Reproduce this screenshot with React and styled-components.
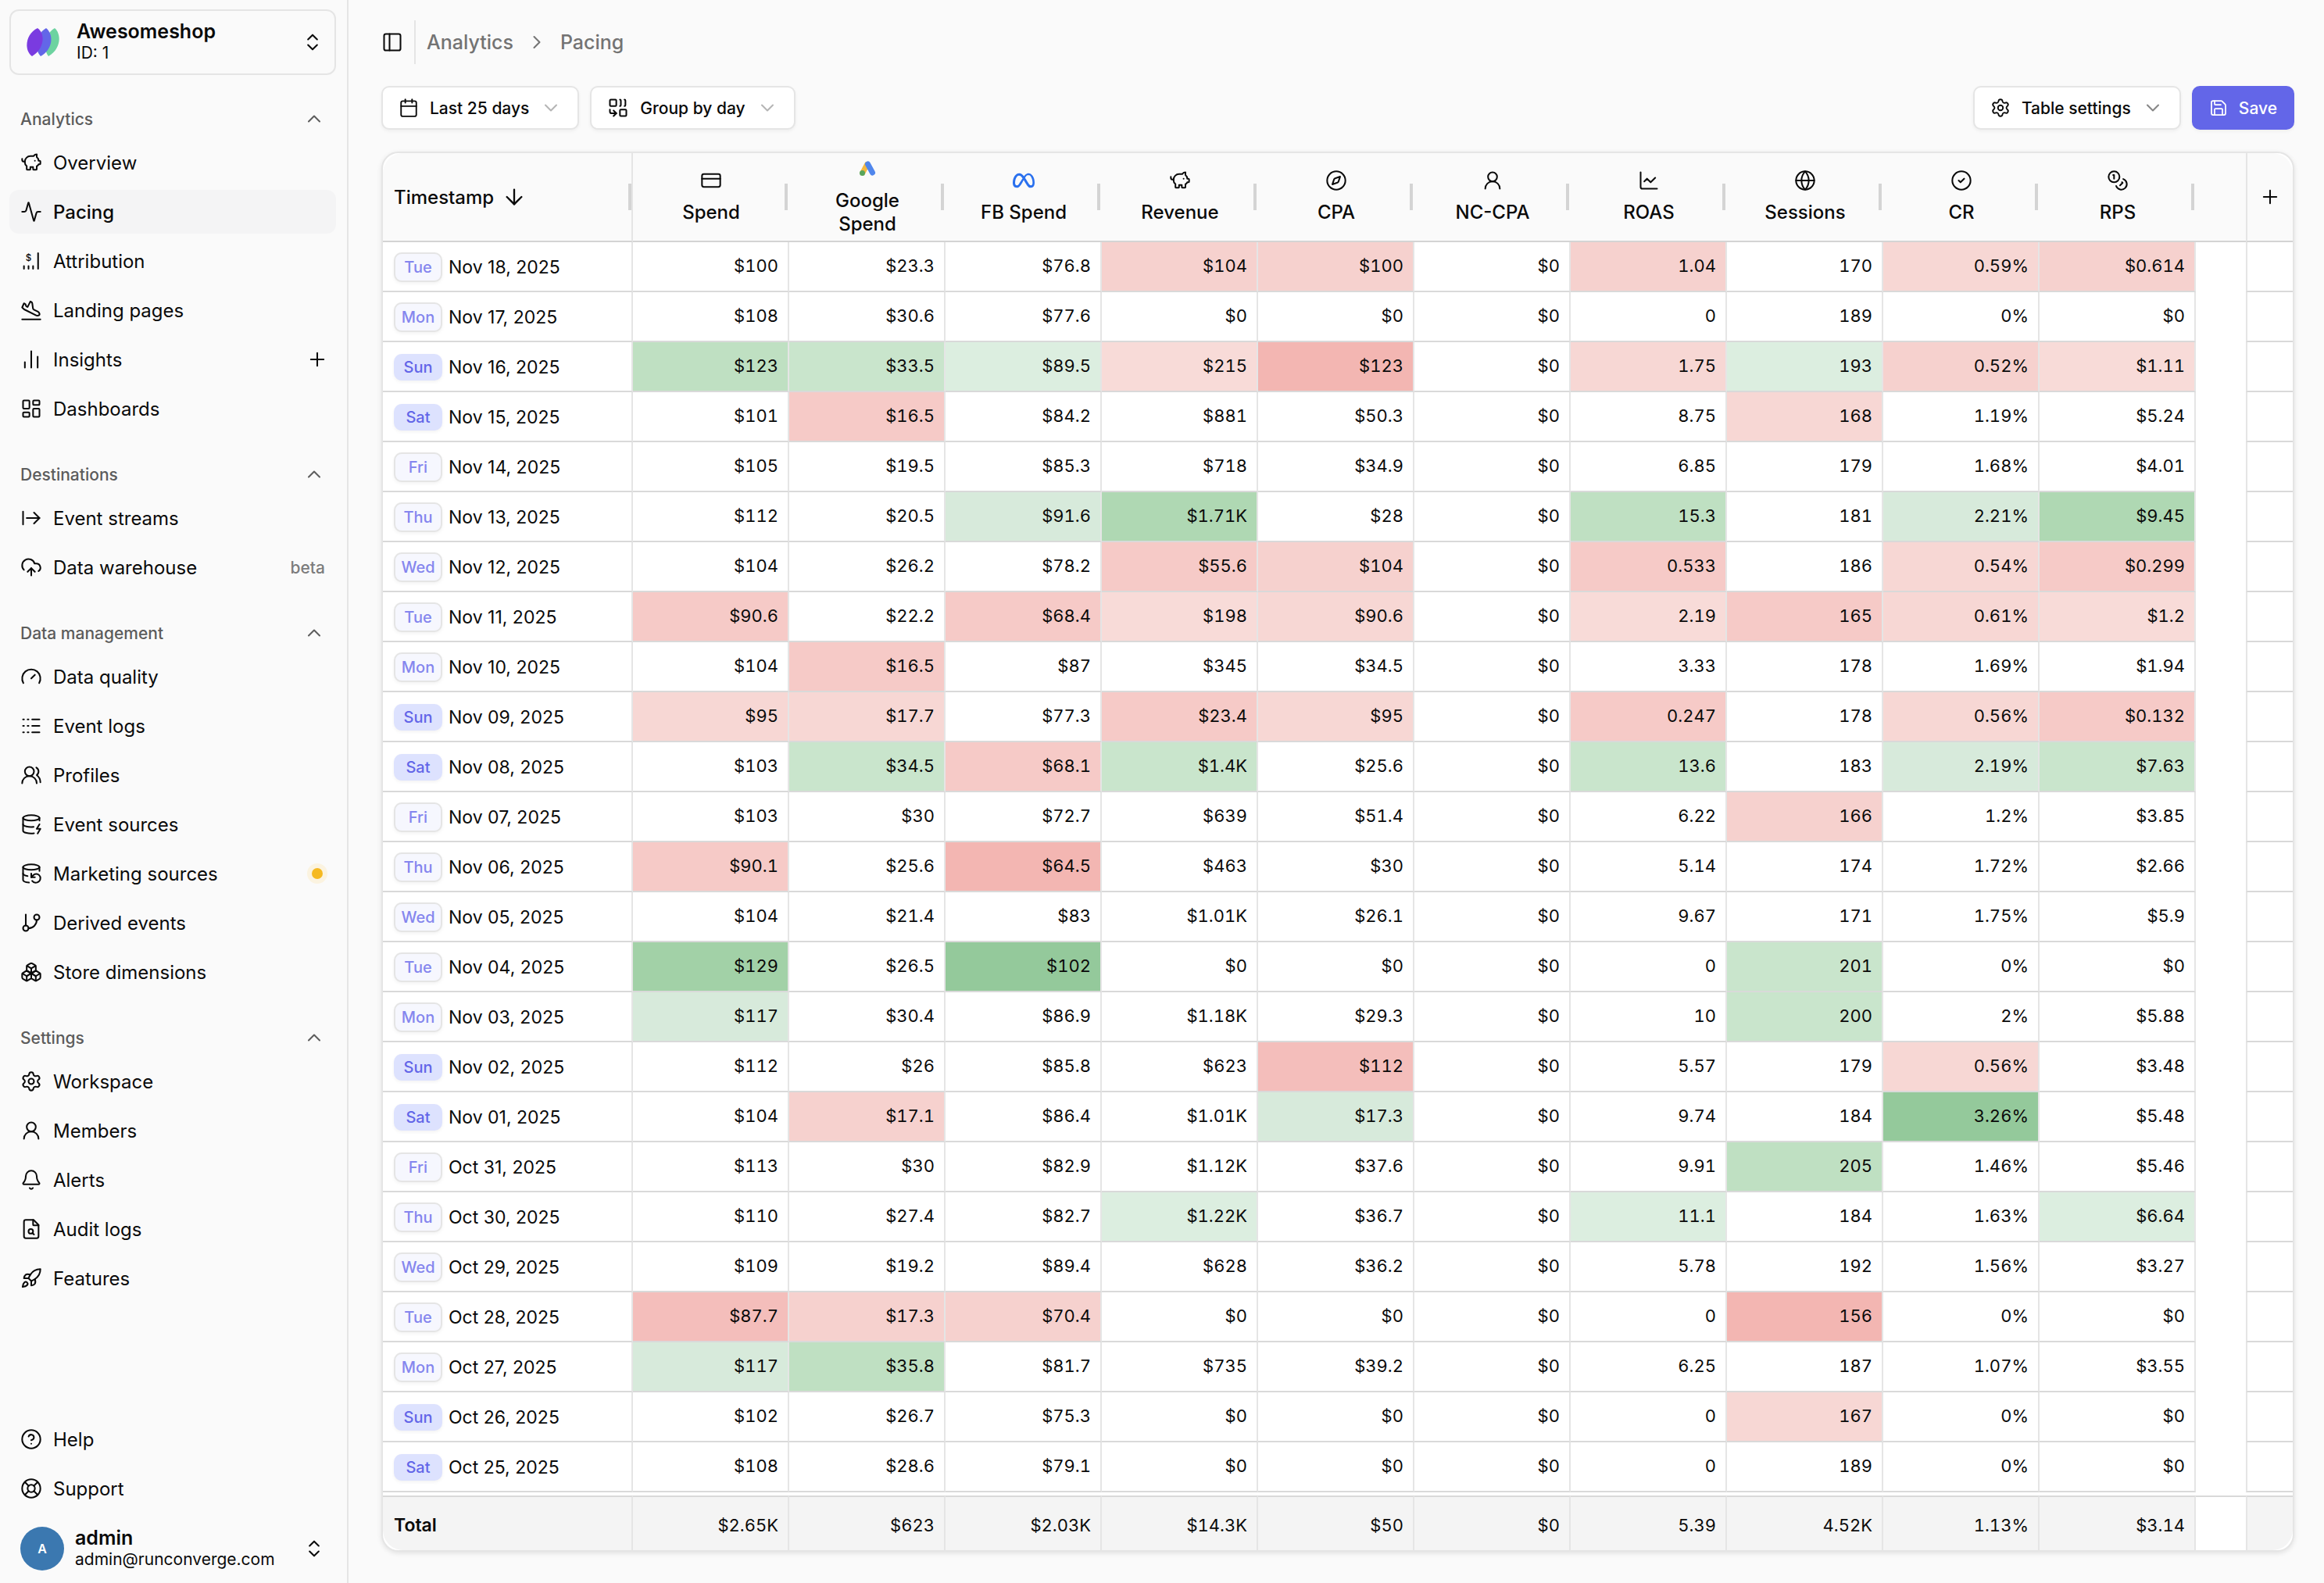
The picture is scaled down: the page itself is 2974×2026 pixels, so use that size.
import React, { useState } from "react";
import styled, { createGlobalStyle } from "styled-components";
import {
  Activity,
  ArrowDown,
  ArrowRightFromLine,
  Bell,
  Boxes,
  Calendar,
  ChartLine,
  ChartNoAxesColumn,
  ChevronDown,
  ChevronRight,
  ChevronsUpDown,
  ChevronUp,
  CircleCheck,
  CircleQuestionMark,
  CloudUpload,
  Coins,
  Combine,
  Compass,
  CreditCard,
  DatabaseBackup,
  DatabaseZap,
  Gauge,
  GitBranch,
  Globe,
  LayoutDashboard,
  LifeBuoy,
  Logs,
  PanelLeft,
  PiggyBank,
  PlaneLanding,
  Plus,
  Rocket,
  Save,
  Settings,
  UserRound,
  UsersRound,
} from "lucide-react";
import { SiMeta } from "react-icons/si";

const GlobalStyle = createGlobalStyle`
  * {
    box-sizing: border-box;
  }

  body {
    margin: 0;
    background-color: #fafafa;
    color: #0a0a0a;
    font-family: Inter, "Liberation Sans", sans-serif;
    font-size: 24px;
  }

  button {
    font-family: inherit;
    color: inherit;
    cursor: pointer;
  }

  svg {
    flex-shrink: 0;
  }

  .lucide {
    stroke-width: 1.75;
  }
`;

/* ---------- layout ---------- */

const Page = styled.div`
  display: flex;
  min-height: 100vh;
`;

const Sidebar = styled.aside`
  display: flex;
  flex-direction: column;
  flex-shrink: 0;
  width: 446px;
  padding: 12px 14px 16px 12px;
  border-right: 2px solid #e5e5e5;
`;

const Main = styled.main`
  flex: 1;
  min-width: 0;
  padding: 26px 38px 40px 42px;
`;

/* ---------- sidebar ---------- */

const WorkspaceButton = styled.button`
  display: flex;
  align-items: center;
  height: 84px;
  padding: 0 14px 0 20px;
  border: 2px solid #e5e5e5;
  border-radius: 12px;
  background: none;
  text-align: left;
`;

const AccountButton = styled.button`
  display: flex;
  align-items: center;
  margin-top: 21px;
  padding: 0 14px;
  border: none;
  background: none;
  text-align: left;
`;

const AccountText = styled.span`
  display: flex;
  flex-direction: column;
  flex: 1;
  margin-left: ${(props) => (props.$wide ? "22px" : "14px")};
  font-size: 21px;
  line-height: 28px;
`;

const AccountName = styled.strong`
  font-size: 25px;
  font-weight: 600;
`;

const Avatar = styled.span`
  display: flex;
  align-items: center;
  justify-content: center;
  width: 56px;
  height: 56px;
  border-radius: 50%;
  background-color: #3b78b0;
  color: white;
  font-size: 16px;
  font-weight: 600;
`;

const NavGroup = styled.section`
  margin-top: 32px;
`;

const GroupHeader = styled.button`
  display: flex;
  align-items: center;
  justify-content: space-between;
  width: 100%;
  height: 48px;
  margin-bottom: 4px;
  padding: 0 14px;
  border: none;
  background: none;
  font-size: 21px;
  font-weight: 500;
  color: #5c5c5c;
`;

const NavList = styled.ul`
  display: flex;
  flex-direction: column;
  gap: 7px;
  margin: 0;
  padding: 0;
  list-style: none;
`;

const NavItem = styled.li`
  display: flex;
  align-items: center;
  height: 56px;
  padding: 0 10px 0 14px;
  border-radius: 12px;
  background-color: ${(props) => (props.$active ? "#f4f4f5" : "transparent")};
`;

const NavLink = styled.a`
  display: flex;
  flex: 1;
  align-items: center;
  gap: 14px;
  color: inherit;
  font-size: 24px;
  font-weight: ${(props) => (props.$active ? 500 : 400)};
  text-decoration: none;
`;

const BareButton = styled.button`
  display: flex;
  padding: 0;
  border: none;
  background: none;
`;

const Beta = styled.span`
  padding-right: 4px;
  color: #7c7c7c;
  font-size: 21px;
  font-weight: 500;
`;

const StatusDot = styled.span`
  width: 14px;
  height: 14px;
  margin-right: 7px;
  border-radius: 50%;
  background-color: #f5b921;
  box-shadow: 0 0 0 6px #fbf3e0;
`;

const SidebarFooter = styled.div`
  display: flex;
  flex-direction: column;
  margin-top: auto;
`;

/* ---------- top bar and toolbar ---------- */

const TopBar = styled.header`
  display: flex;
  align-items: center;
  height: 56px;
`;

const Divider = styled.span`
  align-self: stretch;
  width: 2px;
  margin: 0 14px;
  background-color: #e5e5e5;
`;

const Breadcrumb = styled.nav`
  display: flex;
  align-items: center;
  gap: 16px;
  color: #737373;
  font-size: 25px;
  font-weight: 500;

  a {
    color: inherit;
    text-decoration: none;
  }
`;

const Toolbar = styled.div`
  display: flex;
  gap: 14px;
  margin: 28px 0;
`;

const Spacer = styled.span`
  flex: 1;
`;

const ToolButton = styled.button`
  display: flex;
  align-items: center;
  gap: 14px;
  height: 56px;
  padding: 0 20px;
  border: 2px solid ${(props) => (props.$primary ? "#6366e8" : "#e5e5e5")};
  border-radius: 10px;
  background-color: ${(props) => (props.$primary ? "#6366e8" : "white")};
  box-shadow: 0 2px 4px rgba(0, 0, 0, 0.05);
  color: ${(props) => (props.$primary ? "white" : "inherit")};
  font-size: 21px;
  font-weight: 500;
`;

/* ---------- table ---------- */

const Card = styled.div`
  border: 2px solid #e5e5e5;
  border-radius: 22px;
  background-color: white;
  box-shadow: 0 2px 6px rgba(0, 0, 0, 0.1);
`;

const Clip = styled.div`
  overflow: hidden;
  border-radius: 26px;
`;

const Table = styled.table`
  width: 100%;
  table-layout: fixed;
  border-collapse: separate;
  border-spacing: 0;
`;

const Col = styled.col`
  width: ${(props) => props.$width};
`;

const HeadCell = styled.th`
  position: relative;
  height: 114px;
  padding: 0 26px;
  border-bottom: 2px solid #d4d4d4;
  background-color: #fafafa;
  font-weight: 500;
  line-height: 30px;
`;

const TimeHeadCell = styled(HeadCell)`
  padding: 0 14px;
  border-right: 2px solid #e5e5e5;
`;

const AddHeadCell = styled(HeadCell)`
  padding: 0;
  border-left: 2px solid #e5e5e5;

  button {
    width: 100%;
    justify-content: center;
  }
`;

const SortButton = styled(BareButton)`
  align-items: center;
  gap: 10px;
  font-size: 24px;
  font-weight: 500;
`;

const HeadLabel = styled.div`
  display: flex;
  flex-direction: column;
  align-items: center;
  gap: 12px;
`;

// Grip at the right edge of a header cell
const ResizeHandle = styled.span`
  position: absolute;
  top: 39px;
  right: ${(props) => (props.$first ? "0" : "2px")};
  width: 4px;
  height: 34px;
  background-color: #d4d4d4;
  cursor: col-resize;
`;

const DateCell = styled.th`
  height: 64px;
  padding: 2px 14px 0;
  border-right: 2px solid #e5e5e5;
  border-bottom: 2px solid #d9d9d9;
  font-size: 23px;
  font-weight: 400;
  text-align: left;
`;

const DateContent = styled.div`
  display: flex;
  align-items: center;
  gap: 8px;
`;

const DayBadge = styled.span`
  display: flex;
  align-items: center;
  justify-content: center;
  width: 62px;
  height: ${(props) => (props.$weekend ? "34px" : "38px")};
  border: ${(props) => (props.$weekend ? "none" : "2px solid #e5e5e5")};
  border-radius: 10px;
  background-color: ${(props) => (props.$weekend ? "#dde2fe" : "#f6f7fe")};
  box-shadow: 0 2px 4px rgba(0, 0, 0, 0.05);
  color: ${(props) => (props.$weekend ? "#6366e8" : "#8586ee")};
  font-size: 20px;
  font-weight: 500;
`;

const ValueCell = styled.td`
  padding: 0 12px 2px;
  border-right: 2px solid #e5e5e5;
  border-bottom: 2px solid #d9d9d9;
  background-color: ${(props) => props.$tone || "white"};
  font-size: 22px;
  font-weight: 400;
  font-variant-numeric: tabular-nums;
  text-align: right;
`;

const FillerCell = styled.td`
  padding: 0;
`;

const EndCell = styled.td`
  padding: 0;
  border-left: 2px solid #e5e5e5;
  border-bottom: 2px solid #d9d9d9;
`;

const GapCell = styled.td`
  height: 4px;
  padding: 0;
`;

const TotalRow = styled.tr`
  > * {
    height: 70px;
    border-top: 2px solid #d9d9d9;
    border-bottom: none;
    background-color: #f4f4f4;
  }

  > ${FillerCell} {
    background-color: white;
  }
`;

const TotalLabel = styled.th`
  padding: 4px 14px 0;
  border-right: 2px solid #e5e5e5;
  font-size: 23px;
  font-weight: 600;
  text-align: left;
`;

const TotalCell = styled(ValueCell)`
  padding: 4px 12px 0;
`;

/* ---------- drawings ---------- */

const Logo = () => (
  <svg width="42" height="36" viewBox="0 0 42 36" aria-hidden="true">
    <path d="M36 0C45 8 44 27 28 36C21 28 22 8 36 0Z" fill="#6dd3a0" />
    <path d="M25 0C35 8 34 27 18 36C10 28 11 8 25 0Z" fill="#6366e8" />
    <path d="M14 0C25 8 22 27 7 36C-4 28 -1 7 14 0Z" fill="#7a3be0" />
  </svg>
);

const AttributionIcon = ({ size }) => (
  <svg width={size} height={size} viewBox="0 0 24 24" aria-hidden="true">
    <path
      d="M19.5 3.5v17M4 17.5v3M9 17.5v3M14 17.5v3"
      fill="none"
      stroke="currentColor"
      strokeWidth="1.75"
      strokeLinecap="round"
    />
    <text x="9" y="12" fontSize="10" fontWeight="500" textAnchor="middle" fill="currentColor">
      $
    </text>
  </svg>
);

const AuditIcon = ({ size }) => (
  <svg
    width={size}
    height={size}
    viewBox="0 0 24 24"
    fill="none"
    stroke="currentColor"
    strokeWidth="1.75"
    strokeLinecap="round"
    strokeLinejoin="round"
    aria-hidden="true"
  >
    <path d="M6 22a2 2 0 0 1-2-2V4a2 2 0 0 1 2-2h8.5L20 7.5V20a2 2 0 0 1-2 2Z" />
    <path d="M14 2v5a1 1 0 0 0 1 1h5" />
    <circle cx="11.5" cy="14.5" r="2.5" />
    <path d="M13.3 16.3 15 18" />
  </svg>
);

const GoogleAdsIcon = ({ size }) => (
  <svg width={size} height={size} viewBox="0 0 28 28" strokeLinecap="round" aria-hidden="true">
    <path d="M13.500 8.500L8 19" stroke="#f4b942" strokeWidth="7" />
    <path d="M14.500 8L20.500 19" stroke="#5086ec" strokeWidth="7" />
    <circle cx="7.500" cy="19.500" r="3.500" fill="#58a55c" />
  </svg>
);

const MetaIcon = ({ size }) => <SiMeta size={size} color="#2a70ee" />;

/* ---------- data ---------- */

const groups = [
  {
    title: "Analytics",
    items: [
      { label: "Overview", icon: PiggyBank },
      { label: "Pacing", icon: Activity, active: true },
      { label: "Attribution", icon: AttributionIcon },
      { label: "Landing pages", icon: PlaneLanding },
      { label: "Insights", icon: ChartNoAxesColumn, canAdd: true },
      { label: "Dashboards", icon: LayoutDashboard },
    ],
  },
  {
    title: "Destinations",
    items: [
      { label: "Event streams", icon: ArrowRightFromLine },
      { label: "Data warehouse", icon: CloudUpload, beta: true },
    ],
  },
  {
    title: "Data management",
    items: [
      { label: "Data quality", icon: Gauge },
      { label: "Event logs", icon: Logs },
      { label: "Profiles", icon: UsersRound },
      { label: "Event sources", icon: DatabaseZap },
      { label: "Marketing sources", icon: DatabaseBackup, warning: true },
      { label: "Derived events", icon: GitBranch },
      { label: "Store dimensions", icon: Boxes },
    ],
  },
  {
    title: "Settings",
    items: [
      { label: "Workspace", icon: Settings },
      { label: "Members", icon: UserRound },
      { label: "Alerts", icon: Bell },
      { label: "Audit logs", icon: AuditIcon },
      { label: "Features", icon: Rocket },
    ],
  },
];

const helpItems = [
  { label: "Help", icon: CircleQuestionMark },
  { label: "Support", icon: LifeBuoy },
];

const columns = [
  { label: "Spend", icon: CreditCard },
  { label: "Google Spend", icon: GoogleAdsIcon },
  { label: "FB Spend", icon: MetaIcon },
  { label: "Revenue", icon: PiggyBank },
  { label: "CPA", icon: Compass },
  { label: "NC-CPA", icon: UserRound },
  { label: "ROAS", icon: ChartLine },
  { label: "Sessions", icon: Globe },
  { label: "CR", icon: CircleCheck },
  { label: "RPS", icon: Coins },
];

const tones = {
  r1: "#f8dbd8",
  r2: "#f7d7d4",
  r3: "#f6d1ce",
  r4: "#f6cac7",
  r5: "#f4bebb",
  r6: "#f3b6b2",
  g1: "#dceee0",
  g2: "#d7eadb",
  g3: "#c9e5cc",
  g4: "#bfe0c2",
  g5: "#afd8b3",
  g6: "#a2d1a7",
  g7: "#94c99b",
};

// Each row: day, date, values, tone of each value ("--" for none)
const rows = [
  ["Tue", "Nov 18, 2025", "$100 $23.3 $76.8 $104 $100 $0 1.04 170 0.59% $0.614", "-- -- -- r3 r3 -- r3 -- r2 r3"],
  ["Mon", "Nov 17, 2025", "$108 $30.6 $77.6 $0 $0 $0 0 189 0% $0", ""],
  ["Sun", "Nov 16, 2025", "$123 $33.5 $89.5 $215 $123 $0 1.75 193 0.52% $1.11", "g4 g3 g1 r1 r6 -- r2 g1 r3 r1"],
  ["Sat", "Nov 15, 2025", "$101 $16.5 $84.2 $881 $50.3 $0 8.75 168 1.19% $5.24", "-- r4 -- -- -- -- -- r2 -- --"],
  ["Fri", "Nov 14, 2025", "$105 $19.5 $85.3 $718 $34.9 $0 6.85 179 1.68% $4.01", ""],
  ["Thu", "Nov 13, 2025", "$112 $20.5 $91.6 $1.71K $28 $0 15.3 181 2.21% $9.45", "-- -- g2 g5 -- -- g4 -- g2 g5"],
  ["Wed", "Nov 12, 2025", "$104 $26.2 $78.2 $55.6 $104 $0 0.533 186 0.54% $0.299", "-- -- -- r4 r3 -- r4 -- r2 r4"],
  ["Tue", "Nov 11, 2025", "$90.6 $22.2 $68.4 $198 $90.6 $0 2.19 165 0.61% $1.2", "r4 -- r4 r1 r2 -- r1 r4 r2 r1"],
  ["Mon", "Nov 10, 2025", "$104 $16.5 $87 $345 $34.5 $0 3.33 178 1.69% $1.94", "-- r4 -- -- -- -- -- -- -- --"],
  ["Sun", "Nov 09, 2025", "$95 $17.7 $77.3 $23.4 $95 $0 0.247 178 0.56% $0.132", "r2 r2 -- r4 r2 -- r4 -- r2 r4"],
  ["Sat", "Nov 08, 2025", "$103 $34.5 $68.1 $1.4K $25.6 $0 13.6 183 2.19% $7.63", "-- g3 r4 g3 -- -- g3 -- g2 g3"],
  ["Fri", "Nov 07, 2025", "$103 $30 $72.7 $639 $51.4 $0 6.22 166 1.2% $3.85", "-- -- -- -- -- -- -- r3 -- --"],
  ["Thu", "Nov 06, 2025", "$90.1 $25.6 $64.5 $463 $30 $0 5.14 174 1.72% $2.66", "r4 -- r6 -- -- -- -- -- -- --"],
  ["Wed", "Nov 05, 2025", "$104 $21.4 $83 $1.01K $26.1 $0 9.67 171 1.75% $5.9", ""],
  ["Tue", "Nov 04, 2025", "$129 $26.5 $102 $0 $0 $0 0 201 0% $0", "g6 -- g7 -- -- -- -- g3 -- --"],
  ["Mon", "Nov 03, 2025", "$117 $30.4 $86.9 $1.18K $29.3 $0 10 200 2% $5.88", "g2 -- -- -- -- -- -- g3 -- --"],
  ["Sun", "Nov 02, 2025", "$112 $26 $85.8 $623 $112 $0 5.57 179 0.56% $3.48", "-- -- -- -- r5 -- -- -- r2 --"],
  ["Sat", "Nov 01, 2025", "$104 $17.1 $86.4 $1.01K $17.3 $0 9.74 184 3.26% $5.48", "-- r3 -- -- g2 -- -- -- g7 --"],
  ["Fri", "Oct 31, 2025", "$113 $30 $82.9 $1.12K $37.6 $0 9.91 205 1.46% $5.46", "-- -- -- -- -- -- -- g4 -- --"],
  ["Thu", "Oct 30, 2025", "$110 $27.4 $82.7 $1.22K $36.7 $0 11.1 184 1.63% $6.64", "-- -- -- g1 -- -- g1 -- -- g1"],
  ["Wed", "Oct 29, 2025", "$109 $19.2 $89.4 $628 $36.2 $0 5.78 192 1.56% $3.27", ""],
  ["Tue", "Oct 28, 2025", "$87.7 $17.3 $70.4 $0 $0 $0 0 156 0% $0", "r5 r3 r3 -- -- -- -- r6 -- --"],
  ["Mon", "Oct 27, 2025", "$117 $35.8 $81.7 $735 $39.2 $0 6.25 187 1.07% $3.55", "g2 g4 -- -- -- -- -- -- -- --"],
  ["Sun", "Oct 26, 2025", "$102 $26.7 $75.3 $0 $0 $0 0 167 0% $0", "-- -- -- -- -- -- -- r2 -- --"],
  ["Sat", "Oct 25, 2025", "$108 $28.6 $79.1 $0 $0 $0 0 189 0% $0", ""],
];

const totals = "$2.65K $623 $2.03K $14.3K $50 $0 5.39 4.52K 1.13% $3.14".split(" ");

/* ---------- components ---------- */

function NavEntry({ item }) {
  const Icon = item.icon;

  return (
    <NavItem $active={item.active}>
      <NavLink href="#" $active={item.active} aria-current={item.active ? "page" : undefined}>
        <Icon size={28} />
        {item.label}
      </NavLink>
      {item.canAdd && (
        <BareButton aria-label="Add insight">
          <Plus size={28} />
        </BareButton>
      )}
      {item.beta && <Beta>beta</Beta>}
      {item.warning && <StatusDot />}
    </NavItem>
  );
}

function NavSection({ group }) {
  const [open, setOpen] = useState(true);

  return (
    <NavGroup>
      <GroupHeader aria-expanded={open} onClick={() => setOpen(!open)}>
        {group.title}
        {open ? <ChevronUp size={28} /> : <ChevronDown size={28} />}
      </GroupHeader>
      {open && (
        <NavList>
          {group.items.map((item) => (
            <NavEntry key={item.label} item={item} />
          ))}
        </NavList>
      )}
    </NavGroup>
  );
}

function PacingTable() {
  return (
    <Card>
      <Clip>
        <Table>
          <colgroup>
            <Col $width="320px" />
            {columns.map((column) => (
              <Col key={column.label} $width="200px" />
            ))}
            <Col $width="auto" />
            <Col $width="60px" />
          </colgroup>
          <thead>
            <tr>
              <TimeHeadCell scope="col">
                <SortButton>
                  Timestamp
                  <ArrowDown size={32} />
                </SortButton>
                <ResizeHandle $first />
              </TimeHeadCell>
              {columns.map(({ label, icon: Icon }) => (
                <HeadCell key={label} scope="col">
                  <HeadLabel>
                    <Icon size={28} />
                    {label}
                  </HeadLabel>
                  <ResizeHandle />
                </HeadCell>
              ))}
              <HeadCell as="td" />
              <AddHeadCell as="td">
                <BareButton aria-label="Add column">
                  <Plus size={28} />
                </BareButton>
              </AddHeadCell>
            </tr>
          </thead>
          <tbody>
            {rows.map(([day, date, values, marks]) => {
              const toneKeys = marks.split(" ");
              return (
                <tr key={date}>
                  <DateCell scope="row">
                    <DateContent>
                      <DayBadge $weekend={day === "Sat" || day === "Sun"}>{day}</DayBadge>
                      {date}
                    </DateContent>
                  </DateCell>
                  {values.split(" ").map((value, i) => (
                    <ValueCell key={columns[i].label} $tone={tones[toneKeys[i]]}>
                      {value}
                    </ValueCell>
                  ))}
                  <FillerCell />
                  <EndCell />
                </tr>
              );
            })}
          </tbody>
          <tfoot>
            <tr>
              <GapCell colSpan={columns.length + 3} />
            </tr>
            <TotalRow>
              <TotalLabel scope="row">Total</TotalLabel>
              {totals.map((value, i) => (
                <TotalCell key={columns[i].label}>{value}</TotalCell>
              ))}
              <FillerCell />
              <EndCell />
            </TotalRow>
          </tfoot>
        </Table>
      </Clip>
    </Card>
  );
}

export default function App() {
  return (
    <>
      <GlobalStyle />
      <Page>
        <Sidebar>
          <WorkspaceButton>
            <Logo />
            <AccountText $wide>
              <AccountName>Awesomeshop</AccountName>
              ID: 1
            </AccountText>
            <ChevronsUpDown size={28} />
          </WorkspaceButton>
          <nav aria-label="Main">
            {groups.map((group) => (
              <NavSection key={group.title} group={group} />
            ))}
          </nav>
          <SidebarFooter>
            <NavList>
              {helpItems.map((item) => (
                <NavEntry key={item.label} item={item} />
              ))}
            </NavList>
            <AccountButton>
              <Avatar>A</Avatar>
              <AccountText>
                <AccountName>admin</AccountName>
                admin@runconverge.com
              </AccountText>
              <ChevronsUpDown size={28} />
            </AccountButton>
          </SidebarFooter>
        </Sidebar>
        <Main>
          <TopBar>
            <BareButton aria-label="Toggle sidebar">
              <PanelLeft size={28} />
            </BareButton>
            <Divider />
            <Breadcrumb aria-label="Breadcrumb">
              <a href="#">Analytics</a>
              <ChevronRight size={28} />
              <a href="#">Pacing</a>
            </Breadcrumb>
          </TopBar>
          <Toolbar>
            <ToolButton>
              <Calendar size={26} />
              Last 25 days
              <ChevronDown size={28} color="#b4b4b4" />
            </ToolButton>
            <ToolButton>
              <Combine size={28} />
              Group by day
              <ChevronDown size={28} color="#b4b4b4" />
            </ToolButton>
            <Spacer />
            <ToolButton>
              <Settings size={26} />
              Table settings
              <ChevronDown size={28} color="#858585" />
            </ToolButton>
            <ToolButton $primary>
              <Save size={24} />
              Save
            </ToolButton>
          </Toolbar>
          <PacingTable />
        </Main>
      </Page>
    </>
  );
}
